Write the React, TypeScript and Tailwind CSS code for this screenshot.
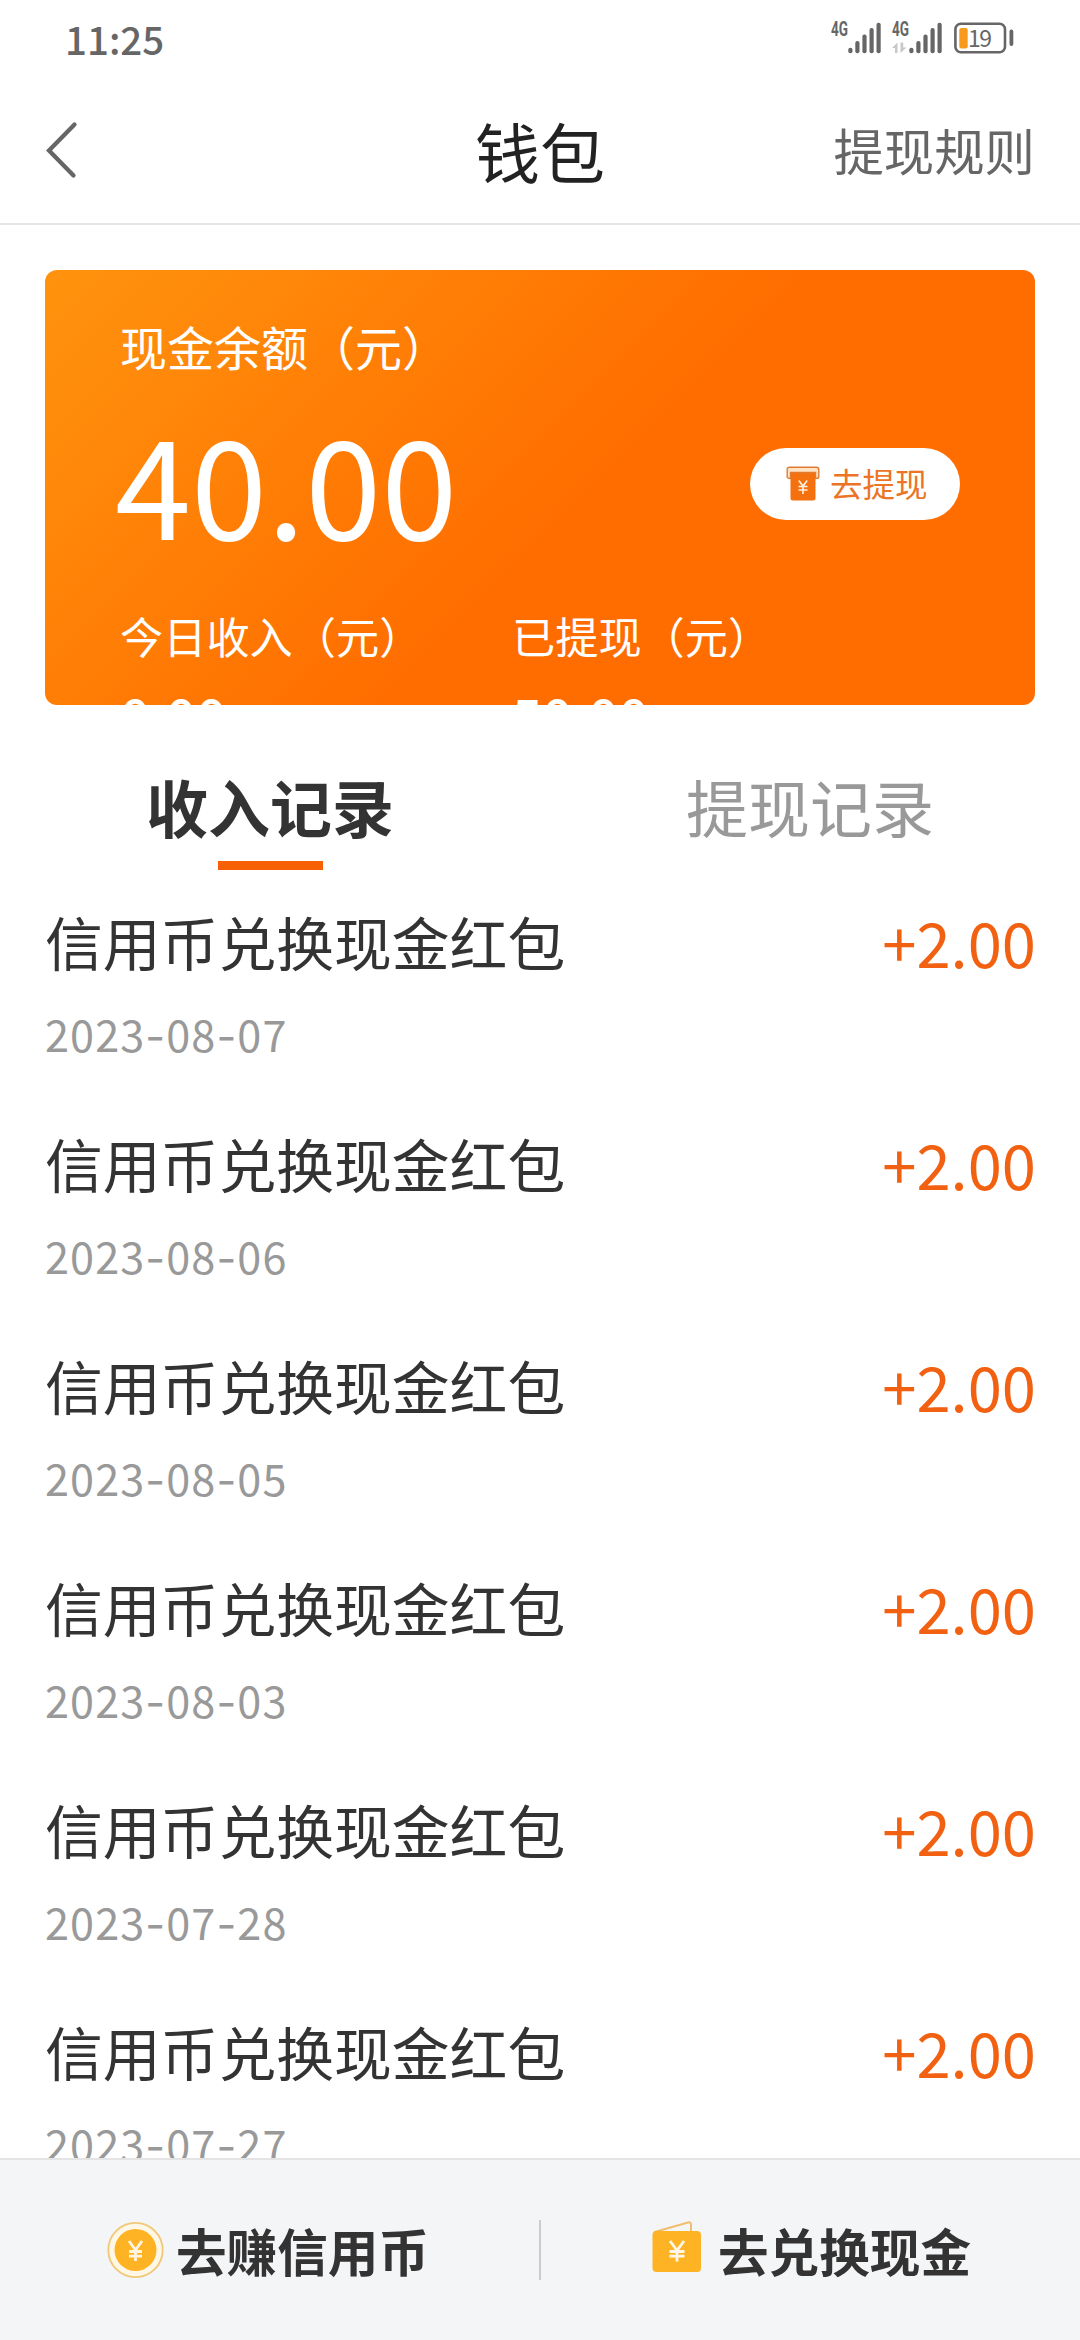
// 钱包页面：展示现金余额、收入记录以及底部快捷入口。
import { useState } from 'react'

interface IncomeRecord {
  id: number
  title: string
  date: string
  amount: string
}

const records: IncomeRecord[] = [
  { id: 1, title: '信用币兑换现金红包', date: '2023-08-07', amount: '+2.00' },
  { id: 2, title: '信用币兑换现金红包', date: '2023-08-06', amount: '+2.00' },
  { id: 3, title: '信用币兑换现金红包', date: '2023-08-05', amount: '+2.00' },
  { id: 4, title: '信用币兑换现金红包', date: '2023-08-03', amount: '+2.00' },
  { id: 5, title: '信用币兑换现金红包', date: '2023-07-28', amount: '+2.00' },
  { id: 6, title: '信用币兑换现金红包', date: '2023-07-27', amount: '+2.00' },
]

const tabs = ['收入记录', '提现记录']

// 信号格，dual 为 true 时显示上下行箭头。
const Signal = ({ dual = false }: { dual?: boolean }): JSX.Element => (
  <svg width="50" height="40" viewBox="0 -4 50 40" fill="#666" className="overflow-visible">
    <text
      x="0"
      y="14"
      fontFamily="Roboto, sans-serif"
      fontSize="19.5"
      fontWeight="700"
      textLength="17"
      lengthAdjust="spacingAndGlyphs"
    >
      4G
    </text>
    {dual ? (
      <g fill="#c8c8c8">
        <path d="M0 26l5.500-5.500V31H3v-5z" />
        <path d="M8.500 20.500v10.500l6-5.500h-3.300v-5z" />
      </g>
    ) : null}
    <rect x="17.300" y="25.700" width="4.200" height="5.600" rx="2" />
    <rect x="24.300" y="19" width="4.200" height="12.300" rx="2" />
    <rect x="31.400" y="12.500" width="4.200" height="18.800" rx="2" />
    <rect x="38.500" y="6" width="4.200" height="25.300" rx="2" />
    <rect x="45.500" y="0.700" width="4.200" height="30.600" rx="2" />
  </svg>
)

const Battery = (): JSX.Element => (
  <svg width="60" height="40" viewBox="0 -4 60 40" fill="none" className="overflow-visible">
    <rect x="1.400" y="1.700" width="49.600" height="28.600" rx="5.500" stroke="#666" strokeWidth="2.600" />
    <rect x="5.300" y="6" width="8.400" height="20.400" rx="2" fill="#f89a1c" />
    <text x="14" y="24.600" fontFamily="Noto Sans CJK SC, sans-serif" fontSize="23" fill="#666" textLength="24">
      19
    </text>
    <rect x="55.500" y="7.500" width="3.800" height="16.500" rx="1.900" fill="#666" />
  </svg>
)

const BackIcon = (): JSX.Element => (
  <svg width="34" height="58" viewBox="0 0 34 58" fill="none">
    <path d="M29.500 3.500L4 29.500 28.500 54.500" stroke="#666" strokeWidth="4.300" strokeLinecap="round" />
  </svg>
)

const WithdrawIcon = (): JSX.Element => (
  <svg width="34" height="35" viewBox="0 0 34 35" fill="none">
    <path d="M4.500 6h25v26a2.500 2.500 0 0 1-2.500 2.500H7A2.500 2.500 0 0 1 4.500 32z" fill="#f5700f" />
    <path
      d="M3.500 1.200h27a2.300 2.300 0 0 1 2.300 2.300v7.200c0 1.300-1.500 1.800-3.300 1.800V6.500H4.500v6c-1.800 0-3.300-.5-3.300-1.800V3.500a2.300 2.300 0 0 1 2.300-2.300z"
      fill="#ffe3c4"
      stroke="#e07b30"
      strokeWidth="1.400"
    />
    <path d="M12.800 14.500l4.200 5.500 4.200-5.500M12.500 20.500h9M12.500 24h9M17 20v8" stroke="#fff0e0" strokeWidth="1.700" />
  </svg>
)

const CoinIcon = (): JSX.Element => (
  <svg width="57" height="58" viewBox="0 0 57 58" fill="none">
    <circle cx="28.500" cy="29" r="27.200" fill="#fff7e6" stroke="#f0c878" strokeWidth="1.800" />
    <circle cx="28.500" cy="29" r="21" fill="#feb325" />
    <path d="M22 20l6.500 9 6.500-9M22 30.500h13M22 35.200h13M28.500 29v11" stroke="#fff5df" strokeWidth="2.800" />
  </svg>
)

const WalletIcon = (): JSX.Element => (
  <svg width="50" height="52" viewBox="0 0 50 52" fill="none">
    <path d="M2.500 11L36 1.500q3-.7 3 2V11" stroke="#f3bd70" strokeWidth="2" />
    <rect x="0.500" y="10" width="48.500" height="41" rx="4" fill="#feb325" />
    <path d="M18 20l7 9.500 7-9.500M17.500 30.500h15M17.500 35.200h15M25 29v11.500" stroke="#fff8ea" strokeWidth="2.800" />
  </svg>
)

const StatusBar = (): JSX.Element => (
  <div className="flex h-[75px] shrink-0 items-center justify-between pl-[65px] pr-[66px]">
    <span className="text-[38.500px] font-medium leading-[60px] text-[#666]">11:25</span>
    <div className="flex items-center">
      <Signal />
      <div className="ml-[11px]">
        <Signal dual />
      </div>
      <div className="ml-[12px]">
        <Battery />
      </div>
    </div>
  </div>
)

const Header = (): JSX.Element => (
  <header className="flex h-[150px] shrink-0 items-center border-b-2 border-[#e5e5e5] pt-[2px]">
    <div className="flex-1 pl-[45px]">
      <BackIcon />
    </div>
    <h1 className="text-[65px] leading-[90px] text-[#222]">钱包</h1>
    <div className="flex-1 pr-[45px] text-right text-[50.400px] leading-[70px] text-[#666]">提现规则</div>
  </header>
)

// 余额卡片高度固定，超出部分被裁切。
const BalanceCard = (): JSX.Element => (
  <section className="mx-[45px] mt-[45px] h-[435px] shrink-0 overflow-hidden rounded-[12px] bg-linear-135 from-[#ff930e] to-[#ff6d00] to-54% pl-[75px] pt-[43px] text-white">
    <p className="text-[47px] leading-[66px]">现金余额（元）</p>
    <div className="mt-[31px] flex items-center justify-between pr-[75px]">
      <span className="-ml-[5px] text-[137px] leading-[140px]">40.00</span>
      <button type="button" className="mt-[7px] flex h-[72px] w-[210px] items-center rounded-full bg-white pl-[36px]">
        <WithdrawIcon />
        <span className="ml-[10px] -mt-[1px] text-[32.500px] leading-[48px] text-[#ec7426]">去提现</span>
      </button>
    </div>
    <div className="mt-[55px] flex">
      <div className="w-[392px]">
        <p className="text-[43.200px] leading-[60px]">今日收入（元）</p>
        <p className="mt-[20px] text-[53px] font-medium leading-[60px]">0.00</p>
      </div>
      <div>
        <p className="text-[43.200px] leading-[60px]">已提现（元）</p>
        <p className="mt-[20px] text-[53px] font-medium leading-[60px]">50.00</p>
      </div>
    </div>
  </section>
)

// 连字符单独使用 Inter，字形更宽。
const RecordDate = ({ value }: { value: string }): JSX.Element => (
  <p className="mt-[20px] text-[43.200px] leading-[60px] tracking-[1.1px] text-[#999]">
    {value.split('-').map((part, index) => (
      <span key={index}>
        {index > 0 ? <span className="font-[Inter]">-</span> : null}
        {part}
      </span>
    ))}
  </p>
)

const RecordItem = ({ record }: { record: IncomeRecord }): JSX.Element => (
  <li className="h-[222px] pl-[45px] pr-[44px]">
    <div className="flex h-[84px] items-center justify-between">
      <span className="text-[57.800px] leading-[84px] text-[#333]">{record.title}</span>
      <span className="pt-[2px] text-[61.500px] leading-[84px] text-[#f26111]">{record.amount}</span>
    </div>
    <RecordDate value={record.date} />
  </li>
)

const BottomBar = (): JSX.Element => (
  <footer className="flex h-[182px] shrink-0 items-center border-t-2 border-[#e3e4e5] bg-[#f4f5f7] text-[50.600px] font-bold leading-[70px] text-[#333]">
    <div className="flex w-[539px] items-center pl-[107px]">
      <CoinIcon />
      <span className="ml-[12px]">去赚信用币</span>
    </div>
    <div className="h-[60px] w-[2px] bg-[#ccc]" />
    <div className="flex flex-1 items-center pl-[111px]">
      <div className="-mt-[7px]">
        <WalletIcon />
      </div>
      <span className="ml-[16px]">去兑换现金</span>
    </div>
  </footer>
)

export default function App(): JSX.Element {
  const [active, setActive] = useState(0)

  return (
    <div className="flex h-[2340px] w-[1080px] flex-col overflow-hidden bg-white font-['Noto_Sans_CJK_SC',sans-serif]">
      <StatusBar />
      <Header />
      <main className="flex min-h-0 flex-1 flex-col overflow-hidden">
        <BalanceCard />
        <nav className="mt-[57px] grid shrink-0 grid-cols-2">
          {tabs.map((tab, index) => (
            <button
              key={tab}
              type="button"
              onClick={() => setActive(index)}
              className="flex flex-col items-center text-[62px] leading-[88px]"
            >
              <span className={index === active ? 'font-bold text-[#333]' : 'text-[#999]'}>{tab}</span>
              <span className={index === active ? 'mt-[11px] h-[9px] w-[105px] bg-[#f76005]' : 'mt-[11px] h-[9px]'} />
            </button>
          ))}
        </nav>
        <ul className="mt-[29px]">
          {records.map((record) => (
            <RecordItem key={record.id} record={record} />
          ))}
        </ul>
      </main>
      <BottomBar />
    </div>
  )
}
